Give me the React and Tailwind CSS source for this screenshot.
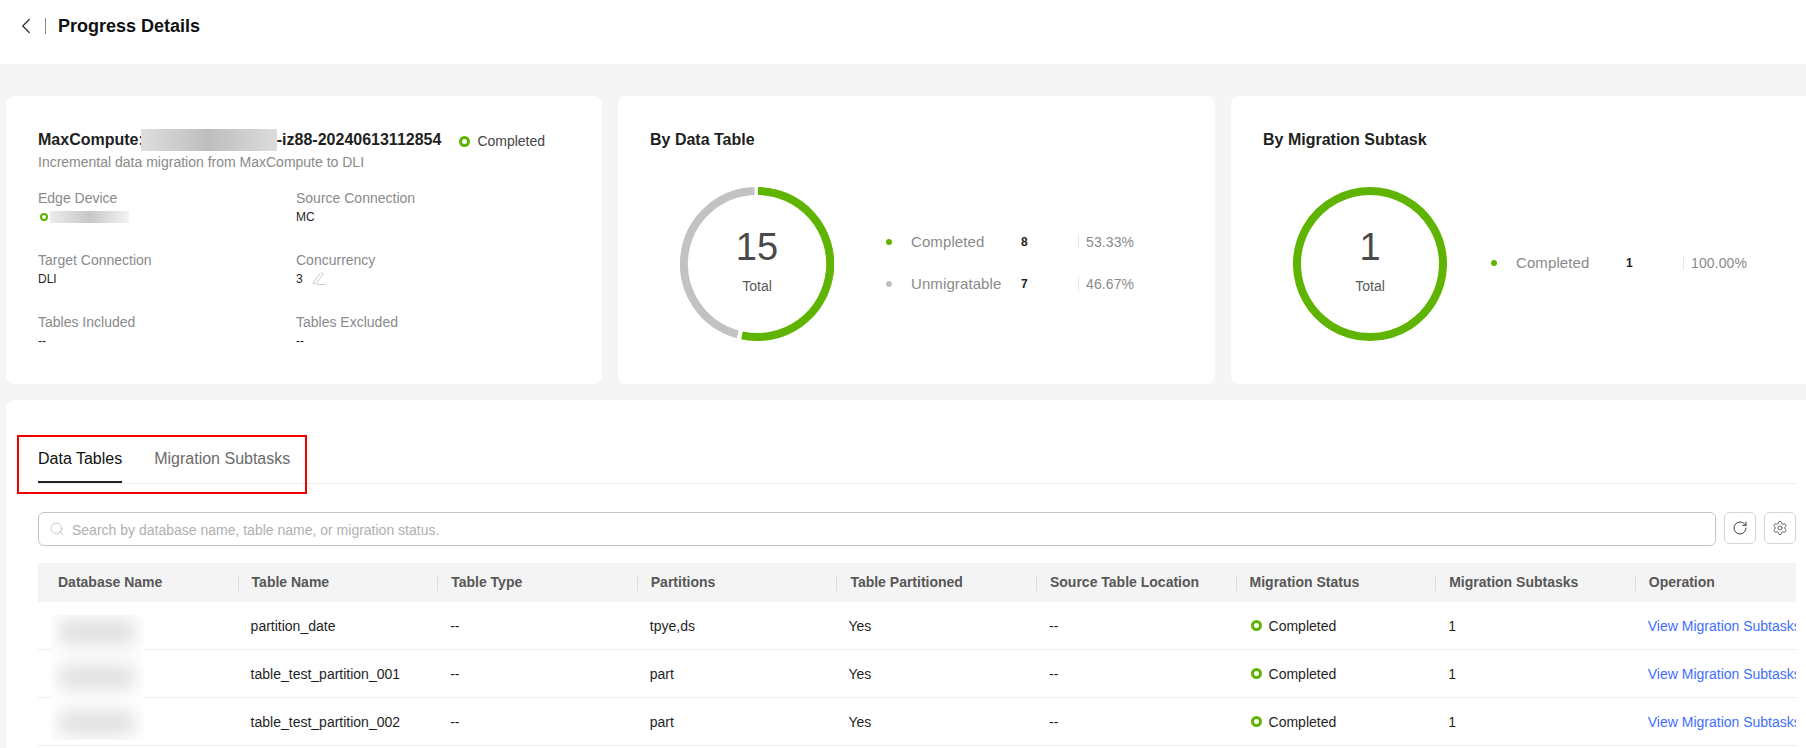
import React from "react";
import { ChevronLeft, Search, RotateCw, Settings } from "lucide-react";

const rows = [
  { table: "partition_date", partitions: "tpye,ds" },
  { table: "table_test_partition_001", partitions: "part" },
  { table: "table_test_partition_002", partitions: "part" },
];

const columns = [
  "Database Name",
  "Table Name",
  "Table Type",
  "Partitions",
  "Table Partitioned",
  "Source Table Location",
  "Migration Status",
  "Migration Subtasks",
  "Operation",
];

const gridCols = "grid grid-cols-[repeat(8,199.6px)_180px]";

const StatusDot = () => (
  <span className="inline-block w-[11px] h-[11px] rounded-full border-[3px] border-[#5eb400] shrink-0" />
);

const Field = ({ label, children }) => (
  <div className="h-[62px]">
    <div className="text-sm leading-5 text-[#8a8a8a]">{label}</div>
    <div className="h-[18px] text-xs leading-[18px] text-[#1f1f1f] flex items-center">{children}</div>
  </div>
);

const Donut = ({ total, segments }) => (
  <div className="relative w-[154px] h-[154px] shrink-0">
    <svg width="154" height="154" viewBox="0 0 154 154">
      {segments.map((s) => (
        <path key={s.color} d={s.d} fill="none" stroke={s.color} strokeWidth="8" />
      ))}
    </svg>
    <div className="absolute inset-0 flex flex-col items-center">
      <div className="mt-[36px] text-[38px] leading-[48px] text-[#4a4a4a]">{total}</div>
      <div className="mt-[5px] text-sm leading-5 text-[#595959]">Total</div>
    </div>
  </div>
);

const LegendRow = ({ color, label, count, pct, labelW, countW }) => (
  <div className="flex items-center h-[20px]">
    <span className="w-[6px] h-[6px] rounded-full mr-[19px]" style={{ backgroundColor: color }} />
    <span className="text-[15px] text-[#8a8a8a] tracking-[0.1px] whitespace-nowrap" style={{ width: labelW }}>{label}</span>
    <span className="text-xs font-bold text-[#1f1f1f]" style={{ width: countW }}>{count}</span>
    <span className="w-px h-[14px] bg-[#e6e6e6] mr-[7px]" />
    <span className="text-sm tracking-[0.1px] text-[#8a8a8a]">{pct}</span>
  </div>
);

export default function App() {
  return (
    <div className="w-[1806px] h-[748px] overflow-hidden bg-[#f5f5f5] font-['Liberation_Sans',Arial,sans-serif]">
      <div className="h-16 bg-white flex items-center pl-[13px] pb-[12px]">
        <ChevronLeft size={26} strokeWidth={1.2} className="text-[#333]" />
        <span className="w-px h-4 bg-[#8a8a8a] ml-[6px]" />
        <h1 className="ml-[12px] text-lg font-bold text-[#111]">Progress Details</h1>
      </div>

      <div className="pl-[6px] pt-8 w-[1860px]">
        <div className="flex gap-4">
          <div className="w-[596px] h-[288px] bg-white rounded-lg pl-8 pt-[33px]">
            <div className="flex items-center h-[22px]">
              <span className="text-base font-bold text-[#1f1f1f]">MaxCompute:</span>
              <span className="w-[136px] h-[22px] bg-linear-to-r from-[#dedede] via-[#bebebe] to-[#dcdcdc] -ml-[3px]" />
              <span className="text-base font-bold text-[#1f1f1f]">-iz88-20240613112854</span>
              <span className="ml-[18px] mt-[2px] flex items-center gap-[7px] text-sm text-[#444]">
                <StatusDot />Completed
              </span>
            </div>
            <div className="text-sm leading-5 mt-[1px] text-[#8a8a8a]">Incremental data migration from MaxCompute to DLI</div>
            <div className="grid grid-cols-[258px_1fr] mt-[16px]">
              <Field label="Edge Device">
                <span className="ml-[2px] w-2 h-2 rounded-full border-2 border-[#5eb400] shrink-0" />
                <span className="ml-[2px] w-[79px] h-[12px] bg-linear-to-r from-[#ececec] via-[#c8c8c8] to-[#f4f4f4]" />
              </Field>
              <Field label="Source Connection">MC</Field>
              <Field label="Target Connection">DLI</Field>
              <Field label="Concurrency">
                3
                <svg className="ml-[9px] -mt-[2px]" width="14" height="13" viewBox="0 0 14 13" fill="none" stroke="#cccccc" strokeWidth="1">
                  <path d="M1.5 10 L8.5 1.2 a1.4 1.4 0 0 1 2.2 1.7 L3.8 11.5 L1.2 12 Z" />
                  <path d="M5 12.5 H13.5" />
                </svg>
              </Field>
              <Field label="Tables Included">--</Field>
              <Field label="Tables Excluded">--</Field>
            </div>
          </div>

          <div className="w-[597px] h-[288px] bg-white rounded-lg pl-8 pt-[34px]">
            <div className="text-base font-bold leading-5 text-[#1f1f1f]">By Data Table</div>
            <div className="flex items-center mt-[37px] ml-[30px]">
              <Donut
                total="15"
                segments={[
                  { color: "#c2c2c2", d: "M 74.5 4.01 A 73 73 0 0 0 57.7 147.4" },
                  { color: "#5eb400", d: "M 78 4.01 A 73 73 0 1 1 62 148.4" },
                ]}
              />
              <div className="ml-[52px] -mt-[2px] flex flex-col gap-[22px]">
                <LegendRow color="#5eb400" label="Completed" count="8" pct="53.33%" labelW={110} countW={57} />
                <LegendRow color="#c2c2c2" label="Unmigratable" count="7" pct="46.67%" labelW={110} countW={57} />
              </div>
            </div>
          </div>

          <div className="w-[607px] h-[288px] bg-white rounded-lg pl-8 pt-[34px]">
            <div className="text-base font-bold leading-5 text-[#1f1f1f]">By Migration Subtask</div>
            <div className="flex items-center mt-[37px] ml-[30px]">
              <Donut
                total="1"
                segments={[{ color: "#5eb400", d: "M 77 4 A 73 73 0 1 1 76.99 4 Z" }]}
              />
              <div className="ml-[44px] -mt-[2px]">
                <LegendRow color="#5eb400" label="Completed" count="1" pct="100.00%" labelW={110} countW={57} />
              </div>
            </div>
          </div>
        </div>

        <div className="relative mt-4 w-[1822px] h-[348px] bg-white rounded-t-lg px-8 overflow-hidden">
          <div className="absolute left-[11px] top-[35px] w-[290px] h-[59px] border-2 border-[#f00000]" />
          <div className="flex h-[84px] border-b border-[#eeeeee] gap-8 items-end">
            <div className="h-[37px] pt-[1px] leading-[24px] text-base text-[#111] border-b-2 border-[#222]">Data Tables</div>
            <div className="h-[37px] pt-[1px] leading-[24px] text-base text-[#6b6b6b]">Migration Subtasks</div>
          </div>

          <div className="flex gap-2 mt-[28px]">
            <div className="flex-1 h-[34px] border border-[#c4c4c4] rounded-md flex items-center pl-[10px]">
              <Search size={16} strokeWidth={1.1} className="text-[#b5b5b5]" />
              <span className="ml-[7px] mt-[1px] text-sm text-[#b0b0b0]">Search by database name, table name, or migration status.</span>
            </div>
            <button className="w-8 h-8 border border-[#d4d4d4] rounded-md flex items-center justify-center">
              <RotateCw size={16} strokeWidth={1.4} className="text-[#333]" />
            </button>
            <button className="w-8 h-8 border border-[#d4d4d4] rounded-md flex items-center justify-center">
              <Settings size={16} strokeWidth={1.2} className="text-[#444]" />
            </button>
          </div>

          <div className="mt-[17px] overflow-hidden">
            <div className={`${gridCols} h-[39px] bg-[#f4f4f4] items-center`}>
              {columns.map((c, i) => (
                <div key={c} className={`h-4 flex items-center text-sm font-bold text-[#575757] pb-[1px] ${i === 0 ? "pl-5" : "pl-[13px] border-l border-[#dddddd]"}`}>
                  {c}
                </div>
              ))}
            </div>
            {rows.map((r) => (
              <div key={r.table} className={`${gridCols} h-[48px] border-b border-[#eeeeee] items-center text-sm text-[#1f1f1f]`}>
                <div />
                <div className="pl-[13px]">{r.table}</div>
                <div className="pl-[13px]">--</div>
                <div className="pl-[13px]">{r.partitions}</div>
                <div className="pl-[12px]">Yes</div>
                <div className="pl-[13px]">--</div>
                <div className="pl-[15px] flex items-center gap-[7px]"><StatusDot />Completed</div>
                <div className="pl-[13px]">1</div>
                <div className="pl-[13px] text-[#3f6fff] whitespace-nowrap">View Migration Subtasks</div>
              </div>
            ))}
          </div>

          <div className="absolute left-[45px] top-[215px] w-[93px] h-[125px] bg-white overflow-hidden">
            <div className="absolute left-[8px] top-[4px] w-[76px] h-[26px] bg-[#e0e0e0] blur-[9px]" />
            <div className="absolute left-[8px] top-[50px] w-[76px] h-[24px] bg-[#e0e0e0] blur-[9px]" />
            <div className="absolute left-[8px] top-[96px] w-[76px] h-[24px] bg-[#e0e0e0] blur-[9px]" />
          </div>
        </div>
      </div>
    </div>
  );
}
